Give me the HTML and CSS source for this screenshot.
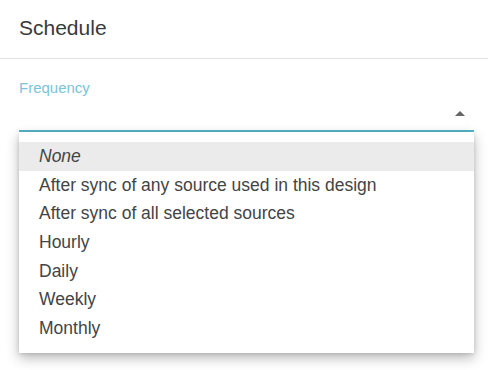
FILE: index.html
```html
<!DOCTYPE html>
<html lang="en">
<head>
    <meta charset="UTF-8">
    <meta name="viewport" content="width=device-width, initial-scale=1.0">
    <title>Schedule</title>
    <link rel="stylesheet" href="styles.css">
</head>
<body>
    <div class="panel">
        <div class="panel-header">Schedule</div>

        <div class="panel-body">
            <div class="field">
                <label class="field-label">Frequency</label>
                <div class="select">
                    <span class="select-arrow"></span>
                </div>

                <ul class="menu">
                    <li class="menu-item active"><em>None</em></li>
                    <li class="menu-item">After sync of any source used in this design</li>
                    <li class="menu-item">After sync of all selected sources</li>
                    <li class="menu-item">Hourly</li>
                    <li class="menu-item">Daily</li>
                    <li class="menu-item">Weekly</li>
                    <li class="menu-item">Monthly</li>
                </ul>
            </div>
        </div>
    </div>
</body>
</html>
```

FILE: styles.css
```css
body {
    font-family: 'Liberation Sans', Arial, sans-serif;
    margin: 0;
    padding: 0;
    background-color: #fff;
    color: #333;
}
.panel {
    width: 488px;
    height: 370px;
}
.panel-header {
    padding: 0 19px 2px;
    line-height: 56px;
    font-size: 21px;
    color: #3a3a3a;
    border-bottom: 1px solid #e3e3e3;
}
.panel-body {
    padding: 20px 14px 0 19px;
}
.field {
    position: relative;
}
.field-label {
    display: block;
    font-size: 15px;
    line-height: 18px;
    color: #7bc3d6;
}
.select {
    height: 33px;
    border-bottom: 2px solid #55b6c9;
    display: flex;
    justify-content: flex-end;
    align-items: flex-start;
}
.select-arrow {
    margin: 14px 9px 0 0;
    width: 0;
    height: 0;
    border-left: 5px solid transparent;
    border-right: 5px solid transparent;
    border-bottom: 5px solid #666;
}
.menu {
    position: absolute;
    top: 53px;
    left: 0;
    right: 0;
    margin: 0;
    padding: 10px 0;
    list-style: none;
    background: #fff;
    box-shadow: 0 5px 12px rgba(0, 0, 0, 0.28), 0 1px 4px rgba(0, 0, 0, 0.12);
}
.menu-item {
    height: 28.7px;
    line-height: 28.7px;
    padding-left: 20px;
    font-size: 17.5px;
    color: #444;
    white-space: nowrap;
}
.menu-item.active {
    background: #ebebeb;
}
```
